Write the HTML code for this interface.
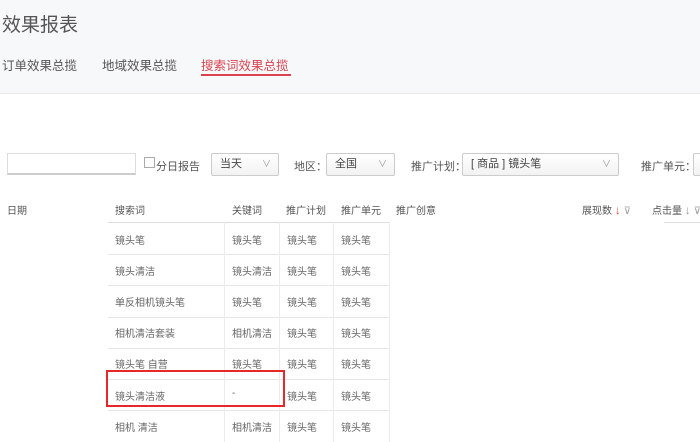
<!DOCTYPE html>
<html><head><meta charset="utf-8"><style>
*{margin:0;padding:0;box-sizing:border-box}
body{width:700px;height:442px;overflow:hidden;background:#fff;font-family:"Liberation Sans","Noto Sans CJK SC",sans-serif;color:#555;position:relative}
.a{position:absolute;white-space:nowrap}
.hdr{position:absolute;left:0;top:0;width:700px;height:94px;background:#f7f8fa;border-bottom:1px solid #e8e8e8}
.sel{position:absolute;top:153px;height:23px;border:1px solid #ccc;border-radius:2px;background:linear-gradient(#fff,#f2f2f2);font-size:11px;line-height:21px;padding-left:8px;color:#444}
.sel i{position:absolute;right:7px;top:0;font-style:normal;color:#999;font-size:9px}
.lbl{font-size:11px;color:#555;top:158px}
.th{font-size:10px;color:#555;top:202px}
.td{font-size:10px;color:#666}
.h{position:absolute;height:1px;background:#e6e6e6}
.v{position:absolute;width:1px;background:#ececec;top:222px;height:220px}
</style></head><body>
<div class="hdr"></div>
<div class="a" style="left:2px;top:10px;font-size:19px;color:#555">效果报表</div>
<div class="a" style="left:2px;top:55px;font-size:12.5px;color:#555">订单效果总揽</div>
<div class="a" style="left:102px;top:55px;font-size:12.5px;color:#555">地域效果总揽</div>
<div class="a" style="left:201px;top:55px;font-size:12.5px;color:#d9434e">搜索词效果总揽</div>
<div class="a" style="left:201px;top:74px;width:90px;height:2px;background:#d9434e"></div>

<div class="a" style="left:7px;top:153px;width:129px;height:22px;border:1px solid #ddd;border-bottom:2px solid #ccc"></div>
<div class="a" style="left:144px;top:157px;width:11px;height:11px;border:1px solid #aaa;background:#fff"></div>
<div class="a lbl" style="left:156px">分日报告</div>
<div class="sel" style="left:211px;width:68px">当天<i>∨</i></div>
<div class="a lbl" style="left:294px">地区：</div>
<div class="sel" style="left:326px;width:69px">全国<i>∨</i></div>
<div class="a lbl" style="left:411px">推广计划：</div>
<div class="sel" style="left:462px;width:157px">[ 商品 ] 镜头笔<i>∨</i></div>
<div class="a lbl" style="left:641px">推广单元：</div>
<div class="sel" style="left:693px;width:20px"></div>

<div class="a th" style="left:7px">日期</div>
<div class="a th" style="left:115px">搜索词</div>
<div class="a th" style="left:232px">关键词</div>
<div class="a th" style="left:286px">推广计划</div>
<div class="a th" style="left:341px">推广单元</div>
<div class="a th" style="left:396px">推广创意</div>
<div class="a th" style="left:582px">展现数 <span style="color:#e0463f;font-size:12px">↓</span> <span style="color:#999">⊽</span></div>
<div class="a th" style="left:652px">点击量 <span style="color:#999;font-size:12px">↓</span> <span style="color:#999">⊽</span></div>

<div class="h" style="left:108px;top:222px;width:282px;background:#ddd"></div>
<div class="h" style="left:664px;top:222px;width:36px;background:#ddd"></div>
<div class="h" style="left:108px;top:254px;width:282px"></div>
<div class="h" style="left:108px;top:285px;width:282px"></div>
<div class="h" style="left:108px;top:317px;width:282px"></div>
<div class="h" style="left:108px;top:348px;width:282px"></div>
<div class="h" style="left:108px;top:379px;width:282px"></div>
<div class="h" style="left:108px;top:410px;width:282px"></div>
<div class="v" style="left:224px"></div>
<div class="v" style="left:279px"></div>
<div class="v" style="left:333px"></div>
<div class="v" style="left:389px"></div>

<div class="a td" style="left:115px;top:232px">镜头笔</div><div class="a td" style="left:232px;top:232px">镜头笔</div><div class="a td" style="left:287px;top:232px">镜头笔</div><div class="a td" style="left:341px;top:232px">镜头笔</div>
<div class="a td" style="left:115px;top:263px">镜头清洁</div><div class="a td" style="left:232px;top:263px">镜头清洁</div><div class="a td" style="left:287px;top:263px">镜头笔</div><div class="a td" style="left:341px;top:263px">镜头笔</div>
<div class="a td" style="left:115px;top:294px">单反相机镜头笔</div><div class="a td" style="left:232px;top:294px">镜头笔</div><div class="a td" style="left:287px;top:294px">镜头笔</div><div class="a td" style="left:341px;top:294px">镜头笔</div>
<div class="a td" style="left:115px;top:325px">相机清洁套装</div><div class="a td" style="left:232px;top:325px">相机清洁</div><div class="a td" style="left:287px;top:325px">镜头笔</div><div class="a td" style="left:341px;top:325px">镜头笔</div>
<div class="a td" style="left:115px;top:356px">镜头笔 自营</div><div class="a td" style="left:232px;top:356px">镜头笔</div><div class="a td" style="left:287px;top:356px">镜头笔</div><div class="a td" style="left:341px;top:356px">镜头笔</div>
<div class="a td" style="left:115px;top:388px">镜头清洁液</div><div class="a td" style="left:232px;top:388px">-</div><div class="a td" style="left:287px;top:388px">镜头笔</div><div class="a td" style="left:341px;top:388px">镜头笔</div>
<div class="a td" style="left:115px;top:419px">相机 清洁</div><div class="a td" style="left:232px;top:419px">相机清洁</div><div class="a td" style="left:287px;top:419px">镜头笔</div><div class="a td" style="left:341px;top:419px">镜头笔</div>

<div class="a" style="left:106px;top:370px;width:179px;height:37px;border:2px solid #e8272b"></div>
</body></html>
